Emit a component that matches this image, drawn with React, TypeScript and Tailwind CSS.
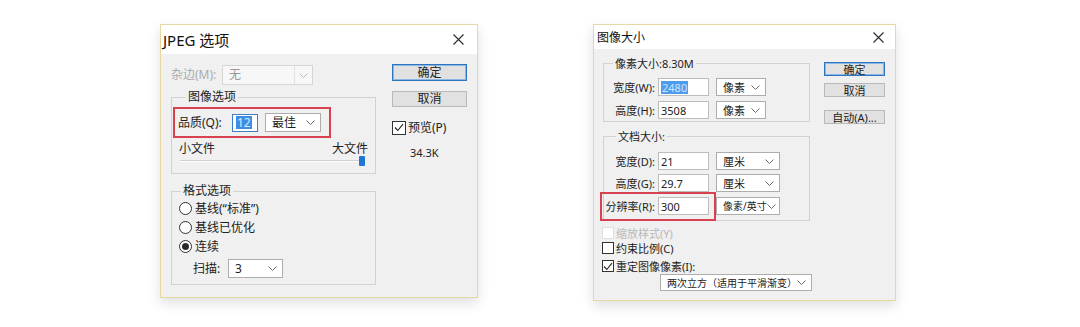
import type { ReactNode } from 'react'

function Chevron({ muted = false }: { muted?: boolean }) {
  return (
    <svg width="9" height="5" viewBox="0 0 9 5" fill="none" aria-hidden="true" className="shrink-0">
      <polyline
        points="0.5,0.5 4.5,4.5 8.5,0.5"
        stroke={muted ? '#b8b8b8' : '#6a6a6a'}
        strokeWidth="1"
      />
    </svg>
  )
}

function CloseX() {
  return (
    <svg width="11" height="11" viewBox="0 0 11 11" fill="none" aria-hidden="true">
      <path d="M0.5 0.5 L10.5 10.5 M10.5 0.5 L0.5 10.5" stroke="#2a2a2a" strokeWidth="1.1" />
    </svg>
  )
}

function Check() {
  return (
    <svg width="10" height="9" viewBox="0 0 10 9" fill="none" aria-hidden="true">
      <polyline points="1,4.5 3.8,7.5 9,1.2" stroke="#222" strokeWidth="1.1" />
    </svg>
  )
}

function Select({ value, className }: { value: string; className: string }) {
  return (
    <div className={`flex items-center justify-between whitespace-nowrap border border-[#adadad] bg-white pl-[6px] pr-[5px] ${className}`}>
      <span>{value}</span>
      <Chevron />
    </div>
  )
}

function Button({ children, primary = false, className }: { children: ReactNode; primary?: boolean; className: string }) {
  return (
    <div
      className={`flex items-center justify-center bg-[#e1e1e1] ${
        primary ? 'border border-[#2f74c0] shadow-[inset_0_0_0_1px_#8ab8e6]' : 'border border-[#b9b9b9]'
      } ${className}`}
    >
      {children}
    </div>
  )
}

function Radio({ label, checked = false }: { label: string; checked?: boolean }) {
  return (
    <div className="flex h-[19px] items-center pl-[7px]">
      <span className="flex size-[13px] items-center justify-center rounded-full border border-[#333] bg-white">
        {checked && <span className="size-[7px] rounded-full bg-[#2a2a2a]" />}
      </span>
      <span className="ml-[3px]">{label}</span>
    </div>
  )
}

function JpegDialog() {
  return (
    <div className="flex h-[274px] w-[318px] flex-col border border-[#e6d7a3] bg-[#f0f0f0] text-[12px] leading-[16px] text-[#222] shadow-[0_5px_12px_rgba(0,0,0,0.13)]">
      <div className="flex h-[29px] items-center justify-between bg-white pl-[2px] pr-[13px]">
        <span className="text-[15px] text-[#111]">JPEG 选项</span>
        <CloseX />
      </div>

      <div className="flex flex-1 pl-[10px] pt-[10px]">
        <div className="flex w-[205px] flex-col">
          <div className="mt-[1px] flex h-[20px] items-center">
            <span className="w-[51px] text-[#ababab]">杂边(M):</span>
            <div className="flex h-[20px] w-[91px] items-center border border-[#d6d6d6] bg-[#f7f7f7] pl-[6px] text-[#9a9a9a]">
              <span className="flex-1">无</span>
              <span className="flex h-full w-[18px] items-center justify-center border-l border-[#e2e2e2]">
                <Chevron muted />
              </span>
            </div>
          </div>

          <fieldset className="mt-[4px] border border-[#d2d2d2] pb-[7px]">
            <legend className="ml-[14px] px-[2px] leading-[16px]">图像选项</legend>
            <div className="ml-[1px] mt-[2px] flex h-[31px] w-[158px] items-center border-2 border-[#d8424f] pl-[3px]">
              <span className="w-[54px]">品质(Q):</span>
              <div className="flex h-[18px] w-[26px] items-center border border-[#3a7fc4] bg-white pl-[3px]">
                <span className="bg-[#3d8de4] px-[1px] leading-[13px] text-[#d8ecff]">12</span>
              </div>
              <Select value="最佳" className="ml-[7px] h-[19px] w-[56px]" />
            </div>
            <div className="mt-[3px] flex h-[15px] justify-between px-[7px] leading-[15px]">
              <span>小文件</span>
              <span>大文件</span>
            </div>
            <div className="ml-[8px] mr-[10px] flex h-[10px] items-center">
              <div className="h-[2px] flex-1 border-b border-white bg-[#cfcfcf]" />
              <div className="h-[10px] w-[6px] rounded-[1px] bg-[#1f78d1]" />
            </div>
          </fieldset>

          <fieldset className="mt-[9px] border border-[#d2d2d2] pb-[6px]">
            <legend className="ml-[9px] px-[2px] leading-[16px]">格式选项</legend>
            <Radio label="基线(“标准”)" />
            <Radio label="基线已优化" />
            <Radio label="连续" checked />
            <div className="mt-[3px] flex h-[19px] items-center pl-[21px]">
              <span className="w-[35px]">扫描:</span>
              <Select value="3" className="h-[19px] w-[55px]" />
            </div>
          </fieldset>
        </div>

        <div className="ml-[16px] flex w-[75px] flex-col">
          <Button primary className="h-[17px] w-[75px]">确定</Button>
          <Button className="mt-[10px] h-[16px] w-[75px]">取消</Button>
          <div className="mt-[13px] flex h-[15px] items-center">
            <span className="flex size-[14px] items-center justify-center border border-[#333] bg-white">
              <Check />
            </span>
            <span className="ml-[2px]">预览(P)</span>
          </div>
          <div className="mt-[10px] pl-[18px] text-[11px]">34.3K</div>
        </div>
      </div>
    </div>
  )
}

function SizeRow({ label, value, unit, selectWidth, selected = false }: { label: string; value: string; unit: string; selectWidth: string; selected?: boolean }) {
  return (
    <div className="flex h-[18px] items-center">
      <span className="w-[51px] whitespace-nowrap text-right">{label}</span>
      <div className="ml-[3px] flex h-[18px] w-[51px] items-center border border-[#bdbdbd] bg-white pl-[2px]">
        {selected ? <span className="bg-[#4e9cec] px-[1px] leading-[13px] text-[#cfe6ff]">{value}</span> : <span>{value}</span>}
      </div>
      <Select value={unit} className={`ml-[7px] h-[18px] ${selectWidth}`} />
    </div>
  )
}

function CheckRow({ label, checked = false, disabled = false, className = '' }: { label: string; checked?: boolean; disabled?: boolean; className?: string }) {
  return (
    <div className={`-ml-[1px] flex h-[14px] items-center ${className}`}>
      <span
        className={`flex size-[12px] items-center justify-center border bg-white ${disabled ? 'border-[#e0e0e0]' : 'border-[#333]'}`}
      >
        {checked && <Check />}
      </span>
      <span className={`ml-[2px] ${disabled ? 'text-[#b8b8b8]' : ''}`}>{label}</span>
    </div>
  )
}

function ImageSizeDialog() {
  return (
    <div className="flex h-[277px] w-[303px] flex-col border border-[#e6d7a3] bg-[#f0f0f0] text-[11px] leading-[15px] text-[#222] shadow-[0_5px_12px_rgba(0,0,0,0.13)]">
      <div className="flex h-[24px] items-center justify-between bg-white pl-[3px] pr-[11px]">
        <span className="text-[12px] text-[#111]">图像大小</span>
        <CloseX />
      </div>

      <div className="flex flex-1 pl-[9px] pt-[7px]">
        <div className="flex w-[207px] flex-col">
          <fieldset className="border border-[#d2d2d2] pb-[2px]">
            <legend className="ml-[9px] px-[2px] leading-[15px]">像素大小:8.30M</legend>
            <div className="mt-[7px]">
              <SizeRow label="宽度(W):" value="2480" unit="像素" selectWidth="w-[50px]" selected />
            </div>
            <div className="mt-[5px]">
              <SizeRow label="高度(H):" value="3508" unit="像素" selectWidth="w-[50px]" />
            </div>
          </fieldset>

          <fieldset className="mt-[7px] border border-[#d2d2d2] pb-[5px]">
            <legend className="ml-[12px] px-[2px] leading-[15px]">文档大小:</legend>
            <div className="mt-[8px]">
              <SizeRow label="宽度(D):" value="21" unit="厘米" selectWidth="w-[64px]" />
            </div>
            <div className="mt-[4px]">
              <SizeRow label="高度(G):" value="29.7" unit="厘米" selectWidth="w-[64px]" />
            </div>
            <div className="relative mt-[5px]">
              <SizeRow label="分辨率(R):" value="300" unit="像素/英寸" selectWidth="w-[64px] text-[10px] pl-[5px] pr-[4px]" />
              <div className="pointer-events-none absolute -left-[4px] -top-[5px] h-[29px] w-[116px] border-2 border-[#d8424f]" />
            </div>
          </fieldset>

          <CheckRow label="缩放样式(Y)" disabled className="mt-[5px]" />
          <CheckRow label="约束比例(C)" className="mt-[1px]" />
          <CheckRow label="重定图像像素(I):" checked className="mt-[4px]" />
          <Select value="两次立方（适用于平滑渐变）" className="ml-[57px] mt-[1px] h-[17px] w-[152px] text-[10px] leading-[14px]" />
        </div>

        <div className="ml-[14px] flex w-[61px] flex-col">
          <Button primary className="mt-[6px] h-[14px] w-[61px]">确定</Button>
          <Button className="mt-[7px] h-[14px] w-[61px]">取消</Button>
          <Button className="mt-[13px] h-[14px] w-[61px]">自动(A)...</Button>
        </div>
      </div>
    </div>
  )
}

export default function App() {
  return (
    <div className="flex h-[327px] w-[1080px] items-start bg-white pl-[160px] pt-[24px] font-['Noto_Sans','Noto_Sans_CJK_SC',sans-serif]">
      <JpegDialog />
      <div className="ml-[115px]">
        <ImageSizeDialog />
      </div>
    </div>
  )
}
